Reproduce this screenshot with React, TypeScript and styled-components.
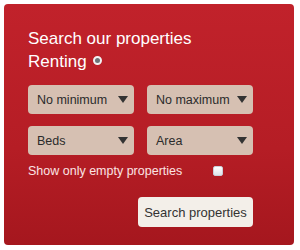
import styled, { createGlobalStyle } from 'styled-components';

const GlobalStyle = createGlobalStyle`
  html, body {
    margin: 0;
    padding: 0;
    background: #ffffff;
    font-family: "Liberation Sans", Arial, sans-serif;
  }
`;

const Page = styled.div`
  padding: 4px 6px 5px 4px;
`;

const Panel = styled.form`
  box-sizing: border-box;
  width: 290px;
  height: 241px;
  padding: 25px 24px 0 24px;
  border-radius: 4px;
  background: linear-gradient(to bottom, #c1222b 0%, #b51d25 60%, #a5171e 100%);
  color: #ffffff;
`;

const Inner = styled.div`
  width: 225px;
  display: flex;
  flex-direction: column;
`;

const Title = styled.h2`
  margin: 0;
  font-size: 17px;
  font-weight: normal;
  line-height: 20px;
`;

const ModeRow = styled.label`
  display: flex;
  align-items: center;
  gap: 6px;
  margin-top: 3px;
  font-size: 17px;
  line-height: 20px;
`;

const Radio = styled.span`
  box-sizing: border-box;
  width: 9px;
  height: 9px;
  border-radius: 50%;
  border: 2px solid #f2f2f2;
  background: #6c7378;
  margin-top: -4px;
`;

const Grid = styled.div`
  display: grid;
  grid-template-columns: 106px 106px;
  column-gap: 13px;
  row-gap: 12px;
  margin-top: 13px;
`;

const Select = styled.div`
  box-sizing: border-box;
  height: 29px;
  padding: 0 6px 0 9px;
  display: flex;
  align-items: center;
  justify-content: space-between;
  border-radius: 4px;
  background: #d6c0b2;
  color: #2b2b2b;
  font-size: 12.5px;
`;

const Arrow = styled.span`
  width: 0;
  height: 0;
  border-left: 5px solid transparent;
  border-right: 5px solid transparent;
  border-top: 7px solid #333333;
`;

const CheckRow = styled.label`
  display: flex;
  align-items: center;
  margin-top: 9px;
  font-size: 12.5px;
  color: #fbe3e3;
  line-height: 14px;
`;

const CheckText = styled.span`
  width: 185px;
`;

const Checkbox = styled.span`
  box-sizing: border-box;
  width: 10px;
  height: 10px;
  border-radius: 2px;
  background: linear-gradient(#ffffff, #dfe4ea);
  border: 1px solid #c9d0d8;
`;

const Actions = styled.div`
  display: flex;
  justify-content: flex-end;
  margin-top: 19px;
`;

const Button = styled.button`
  box-sizing: border-box;
  width: 115px;
  height: 30px;
  border: none;
  border-radius: 4px;
  background: #f3efe9;
  color: #333333;
  font-family: "Liberation Sans", Arial, sans-serif;
  font-size: 13px;
  padding: 0;
`;

const selects = ['No minimum', 'No maximum', 'Beds', 'Area'];

export default function App() {
  return (
    <>
      <GlobalStyle />
      <Page>
        <Panel>
          <Inner>
            <Title>Search our properties</Title>
            <ModeRow>
              Renting
              <Radio />
            </ModeRow>
            <Grid>
              {selects.map((s) => (
                <Select key={s}>
                  <span>{s}</span>
                  <Arrow />
                </Select>
              ))}
            </Grid>
            <CheckRow>
              <CheckText>Show only empty properties</CheckText>
              <Checkbox />
            </CheckRow>
            <Actions>
              <Button type="button">Search properties</Button>
            </Actions>
          </Inner>
        </Panel>
      </Page>
    </>
  );
}
